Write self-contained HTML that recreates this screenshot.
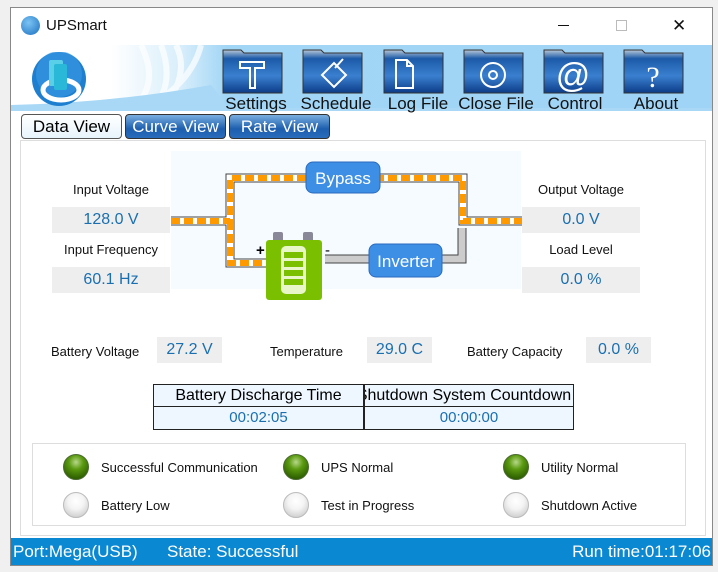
<!DOCTYPE html>
<html><head><style>
*{margin:0;padding:0;box-sizing:border-box}
body{width:718px;height:572px;background:#f0f0f0;position:relative;overflow:hidden;font-family:"Liberation Sans",Arial,sans-serif}
.a{position:absolute}
.win{left:10px;top:7px;width:703px;height:559px;background:#fff;border:1px solid #888}
.lbl{font-size:13px;color:#111;text-align:center}
.val{background:#eeeeee;color:#1a6fb0;font-size:16px;text-align:center;line-height:26px}
.fold{width:61px;height:45px}
.tl{font-size:17px;color:#111;text-align:center;width:90px}
.led{width:26px;height:26px;border-radius:50%}
.g{background:radial-gradient(circle at 50% 30%,#b8d88a 0,#5a9a10 35%,#2d5e00 80%);border:1px solid #4a6a30}
.w{background:radial-gradient(circle at 50% 35%,#fff 0,#f4f4f4 40%,#c8c8c8 90%);border:1px solid #bbb}
.st{font-size:13px;color:#111}
</style></head><body>
<div class="a win"></div>
<!-- title -->
<div class="a" style="left:21px;top:16px;width:19px;height:19px;border-radius:50%;background:radial-gradient(circle at 40% 35%,#7cc4f4,#1a6fc0)"></div>
<div class="a" style="left:46px;top:17px;font-size:15px;color:#111">UPSmart</div>
<div class="a" style="left:558px;top:25px;width:11px;height:1px;background:#111"></div>
<div class="a" style="left:616px;top:20px;width:11px;height:11px;border:1px solid #bbb"></div>
<div class="a" style="left:672px;top:19px;font-size:17px;color:#111;line-height:14px">✕</div>
<!-- toolbar -->
<div class="a" style="left:11px;top:45px;width:701px;height:66px;background:linear-gradient(90deg,#fff 0,#fff 100px,#d8eefb 170px,#a2d6f6 215px,#9fd4f6 100%)"></div>
<svg class="a" style="left:11px;top:45px" width="220" height="66"><path d="M130 0 Q150 40 120 66 M150 0 Q165 40 140 66 M165 0 Q180 30 150 66 M190 0 Q180 40 130 66" stroke="#fff" stroke-width="6" fill="none" opacity=".7"/><path d="M0 60 Q100 58 200 40 L220 66 L0 66Z" fill="#a8d8f6"/></svg>
<div class="a" style="left:11px;top:108px;width:701px;height:3px;background:#a8d8f6"></div>
<svg class="a" style="left:32px;top:52px" width="56" height="56"><circle cx="27" cy="27" r="27" fill="#1e7fd0"/><circle cx="27" cy="22" r="23" fill="#3fa0e8" opacity=".5"/><ellipse cx="29" cy="38" rx="18" ry="10" fill="none" stroke="#fff" stroke-width="5"/><rect x="17" y="8" width="14" height="26" rx="2" fill="#5ad0e8"/><rect x="22" y="12" width="13" height="26" rx="2" fill="#2ab8d8"/></svg>
<svg class="a" style="left:222px;top:48px" width="470" height="46">
<defs><linearGradient id="f" x1="0" y1="0" x2="0" y2="1"><stop offset="0" stop-color="#b8c8d8"/><stop offset=".2" stop-color="#1c5aa8"/><stop offset=".6" stop-color="#3a80d0"/><stop offset="1" stop-color="#0c3c88"/></linearGradient></defs>
<g id="fd"><path d="M1 2 h18 l3 3 h38 v40 h-59z" fill="url(#f)" stroke="#333" stroke-width="1"/></g>
<use href="#fd" x="80"/><use href="#fd" x="161"/><use href="#fd" x="241"/><use href="#fd" x="321"/><use href="#fd" x="401"/>
<g fill="none" stroke="#fff" stroke-width="2">
<path d="M18 14 h24 v6 h-9 v20 h-5 v-20 h-10z"/>
<path d="M100 27 l12 -12 l12 12 l-12 12z M113 20 l8 -9"/>
<path d="M174 12 h11 l6 6 v22 h-17z M185 12 v6 h6"/>
<circle cx="271" cy="27" r="12"/><circle cx="271" cy="27" r="4"/>
</g>
<text x="351" y="39" fill="#fff" font-size="34" text-anchor="middle" font-family="Liberation Sans">@</text>
<text x="431" y="39" fill="#fff" font-size="30" text-anchor="middle" font-family="Liberation Serif">?</text>
</svg>
<div class="a tl" style="left:211px;top:94px">Settings</div>
<div class="a tl" style="left:291px;top:94px">Schedule</div>
<div class="a tl" style="left:373px;top:94px">Log File</div>
<div class="a tl" style="left:451px;top:94px">Close File</div>
<div class="a tl" style="left:530px;top:94px">Control</div>
<div class="a tl" style="left:611px;top:94px">About</div>
<!-- tabs -->
<div class="a" style="left:21px;top:114px;width:101px;height:25px;border:1px solid #555;border-radius:4px;background:linear-gradient(#fff,#e8f4fc);font-size:17px;text-align:center;line-height:23px">Data View</div>
<div class="a" style="left:125px;top:114px;width:101px;height:25px;border:1px solid #333;border-radius:4px;background:linear-gradient(#7aaee0,#1d5fae 60%,#2a6cbc);color:#fff;font-size:17px;text-align:center;line-height:23px">Curve View</div>
<div class="a" style="left:229px;top:114px;width:101px;height:25px;border:1px solid #333;border-radius:4px;background:linear-gradient(#7aaee0,#1d5fae 60%,#2a6cbc);color:#fff;font-size:17px;text-align:center;line-height:23px">Rate View</div>
<!-- panel -->
<div class="a" style="left:20px;top:140px;width:686px;height:396px;border:1px solid #ddd;background:#fff"></div>
<div class="a" style="left:171px;top:151px;width:350px;height:138px;background:#f5fbff"></div>
<svg class="a" style="left:160px;top:145px" width="370" height="160">
<g fill="none">
<path d="M302 83 V114 H165" stroke="#444" stroke-width="9"/>
<path d="M302 83 V114 H165" stroke="#ccc" stroke-width="7"/>
<path d="M11 76 H70 V33 H303 V76 H362 M70 76 V118 H110" stroke="#444" stroke-width="9"/>
<path d="M11 76 H70 V33 H303 V76 H362 M70 76 V118 H110" stroke="#fff" stroke-width="7"/>
<path d="M11 76 H70 V33 H303 V76 H362 M70 76 V118 H110" stroke="#f90" stroke-width="6" stroke-dasharray="9 4"/>
</g>
<text x="96" y="110" font-size="15" font-family="Liberation Sans" font-weight="bold">+</text>
<text x="165" y="110" font-size="15" font-family="Liberation Sans">-</text>
<rect x="113" y="87" width="10" height="10" rx="2" fill="#889"/><rect x="143" y="87" width="10" height="10" rx="2" fill="#889"/>
<rect x="106" y="95" width="56" height="60" rx="3" fill="#7ac000"/>
<rect x="121" y="101" width="25" height="48" rx="5" fill="#e8f6c8"/>
<g fill="#7ac000"><rect x="124" y="107" width="19" height="6"/><rect x="124" y="116" width="19" height="6"/><rect x="124" y="125" width="19" height="6"/><rect x="124" y="134" width="19" height="6"/></g>
<rect x="146" y="17" width="74" height="31" rx="7" fill="#3d8fe6" stroke="#2a6abf"/>
<text x="183" y="39" fill="#fff" font-size="17" text-anchor="middle" font-family="Liberation Sans">Bypass</text>
<rect x="209" y="99" width="73" height="33" rx="7" fill="#3d8fe6" stroke="#2a6abf"/>
<text x="246" y="122" fill="#fff" font-size="17" text-anchor="middle" font-family="Liberation Sans">Inverter</text>
</svg>
<div class="a lbl" style="left:52px;top:182px;width:118px">Input Voltage</div>
<div class="a val" style="left:52px;top:207px;width:118px">128.0 V</div>
<div class="a lbl" style="left:52px;top:242px;width:118px">Input Frequency</div>
<div class="a val" style="left:52px;top:267px;width:118px">60.1 Hz</div>
<div class="a lbl" style="left:522px;top:182px;width:118px">Output Voltage</div>
<div class="a val" style="left:522px;top:207px;width:118px">0.0 V</div>
<div class="a lbl" style="left:522px;top:242px;width:118px">Load Level</div>
<div class="a val" style="left:522px;top:267px;width:118px">0.0 %</div>
<div class="a lbl" style="left:51px;top:344px">Battery Voltage</div>
<div class="a val" style="left:157px;top:337px;width:65px">27.2 V</div>
<div class="a lbl" style="left:270px;top:344px">Temperature</div>
<div class="a val" style="left:367px;top:337px;width:65px">29.0 C</div>
<div class="a lbl" style="left:467px;top:344px">Battery Capacity</div>
<div class="a val" style="left:586px;top:337px;width:65px">0.0 %</div>
<!-- table -->
<div class="a" style="left:153px;top:384px;width:421px;height:46px;background:#222"></div>
<div class="a" style="left:154px;top:385px;width:209px;height:21px;background:#eef7ff;font-size:16px;text-align:center;line-height:21px">Battery Discharge Time</div>
<div class="a" style="left:365px;top:385px;width:208px;height:21px;background:#eef7ff;font-size:16px;text-align:center;line-height:21px;overflow:hidden;white-space:nowrap"><span style="margin-left:-10px">Shutdown System Countdown</span></div>
<div class="a" style="left:154px;top:407px;width:209px;height:22px;background:#eef7ff;font-size:15px;color:#1a6fb0;text-align:center;line-height:22px">00:02:05</div>
<div class="a" style="left:365px;top:407px;width:208px;height:22px;background:#eef7ff;font-size:15px;color:#1a6fb0;text-align:center;line-height:22px">00:00:00</div>
<!-- status box -->
<div class="a" style="left:32px;top:443px;width:654px;height:83px;border:1px solid #ddd"></div>
<div class="a led g" style="left:63px;top:454px"></div><div class="a st" style="left:101px;top:460px">Successful Communication</div>
<div class="a led g" style="left:283px;top:454px"></div><div class="a st" style="left:321px;top:460px">UPS Normal</div>
<div class="a led g" style="left:503px;top:454px"></div><div class="a st" style="left:541px;top:460px">Utility Normal</div>
<div class="a led w" style="left:63px;top:492px"></div><div class="a st" style="left:101px;top:498px">Battery Low</div>
<div class="a led w" style="left:283px;top:492px"></div><div class="a st" style="left:321px;top:498px">Test in Progress</div>
<div class="a led w" style="left:503px;top:492px"></div><div class="a st" style="left:541px;top:498px">Shutdown Active</div>
<!-- statusbar -->
<div class="a" style="left:11px;top:538px;width:701px;height:27px;background:#0a88d2;color:#fff;font-size:17px;line-height:27px">
<span class="a" style="left:2px">Port:Mega(USB)</span><span class="a" style="left:156px">State: Successful</span><span class="a" style="right:1px">Run time:01:17:06</span></div>
</body></html>
